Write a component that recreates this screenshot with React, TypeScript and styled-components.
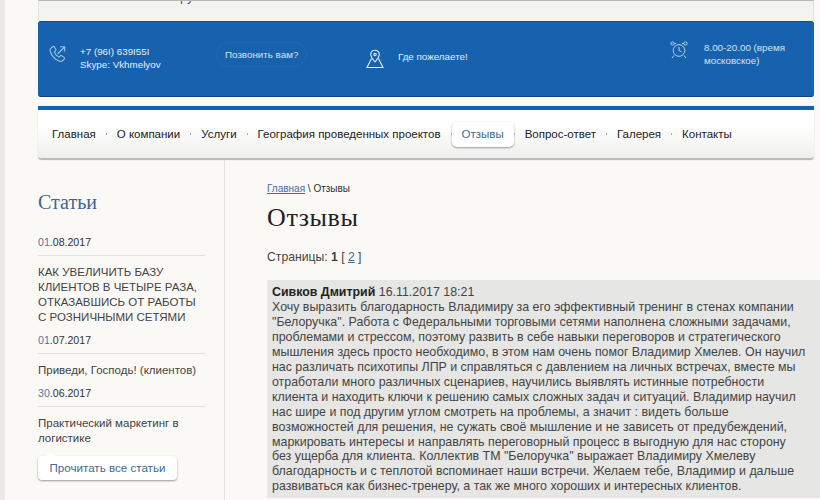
import * as React from 'react';
import styled, { createGlobalStyle } from 'styled-components';

const GlobalStyle = createGlobalStyle`
    html, body {
        margin: 0;
        padding: 0;
        height: 500px;
        overflow: hidden;
        background: #faf9f5;
        font-family: "Liberation Sans", Arial, sans-serif;
    }
`;

const Page = styled.div`
    width: 820px;
    height: 500px;
    overflow: hidden;
    border-left: 5px solid #e9e9e7;
    box-sizing: border-box;
    background: #faf9f5;
`;

const Container = styled.div`
    margin-left: 33px;
    width: 776px;
`;

const TopStrip = styled.div`
    height: 21px;
    box-sizing: border-box;
    border-top: 1px solid #b9b9b7;
    background: #f3f3f2;
    overflow: hidden;
    border-left: 1px solid #e4e4e2;
    border-right: 1px solid #e4e4e2;
`;

const TopStripText = styled.div`
    margin: -11px 0 0 141px;
    font-size: 13px;
    line-height: 14px;
    color: #555;
`;

const BlueBar = styled.div`
    height: 76px;
    box-sizing: border-box;
    background: #1762ae;
    border-top: 1px solid #0f4f95;
    border-bottom: 1px solid #0c447f;
    border-radius: 3px;
    display: flex;
    color: #e4eef7;
    font-size: 9.8px;
    line-height: 13px;
`;

const PhoneBlock = styled.div`
    display: flex;
    align-items: flex-start;
    width: 178px;
    padding: 23px 0 0 11px;
    box-sizing: border-box;
`;

const IconSlot = styled.div<{ $w: number; $top?: number }>`
    width: ${p => p.$w}px;
    margin-top: ${p => p.$top || 0}px;
    flex: none;
    line-height: 0;
`;

const CallSlot = styled.div`
    width: 150px;
    padding-top: 20px;
`;

const CallButton = styled.div`
    display: inline-block;
    height: 25px;
    line-height: 24px;
    box-sizing: border-box;
    padding: 0 8px;
    border-radius: 13px;
    border: 1px solid #1f6ab4;
    color: #d3e3f2;
`;

const WishBlock = styled.div`
    display: flex;
    width: 304px;
    padding-top: 27px;
    box-sizing: border-box;
`;

const WishText = styled.div`
    padding-top: 1px;
`;

const TimeBlock = styled.div`
    display: flex;
    padding-top: 20px;
    color: #d5e3f1;
    line-height: 12.5px;
`;

const NavBar = styled.nav`
    margin-top: 9px;
    height: 54px;
    box-sizing: border-box;
    border-top: 4px solid #1762ae;
    border-bottom: 2px solid #bcbcba;
    border-radius: 0 0 4px 4px;
    background: linear-gradient(#ffffff 30%, #efefee);
    box-shadow: 0 0 1px #bbb;
    display: flex;
    align-items: center;
    padding: 0 0 0 4px;
    font-size: 11.5px;
    color: #222;
`;

const NavItem = styled.div<{ $active?: boolean }>`
    height: 25px;
    line-height: 25px;
    padding: 0 10px;
    margin-top: 1px;
    border-radius: 5px;
    color: ${p => (p.$active ? '#3f6a97' : '#222')};
    background: ${p => (p.$active ? '#fff' : 'transparent')};
    box-shadow: ${p => (p.$active ? '0 1px 2px #999' : 'none')};
`;

const NavDot = styled.span`
    width: 1px;
    height: 2px;
    background: #9fb2c6;
    flex: none;
`;

const Body = styled.div`
    display: flex;
`;

const Sidebar = styled.aside`
    width: 220px;
    height: 340px;
    flex: none;
    box-sizing: border-box;
    padding: 30px 0 0 33px;
    border-right: 1px solid #e2e2df;
`;

const SideTitle = styled.h2`
    margin: 0 0 21px;
    font: 400 20px/24px "Liberation Serif", serif;
    color: #3f6596;
`;

const DateRow = styled.div`
    width: 167px;
    height: 20px;
    font-size: 10.6px;
    line-height: 15px;
    color: #333;
    border-bottom: 1px solid #e2e1dd;
`;

const DateDay = styled.span`
    color: #4f75a3;
`;

const ArticleLink = styled.div`
    width: 167px;
    margin: 9px 0 8px;
    font-size: 11.5px;
    line-height: 15px;
    color: #444;
`;

const AllButton = styled.div`
    position: relative;
    display: inline-block;
    margin-top: 2px;
    height: 24px;
    line-height: 24px;
    padding: 0 11.500px;
    background: #fff;
    border-radius: 4px;
    box-shadow: 0 1px 2px #999;
    font-size: 11.6px;
    color: #45698f;
    &::before {
        content: '';
        position: absolute;
        left: 8px;
        top: -4px;
        border-left: 5px solid transparent;
        border-right: 5px solid transparent;
        border-bottom: 4px solid #fff;
    }
`;

const Main = styled.main`
    flex: 1;
    padding: 22px 0 0 42px;
`;

const Crumbs = styled.div`
    font-size: 10px;
    line-height: 14px;
    color: #333;
`;

const CrumbLink = styled.a`
    color: #3f6f9f;
    text-decoration: underline;
`;

const PageTitle = styled.h1`
    margin: 7px 0 16px;
    font: 400 26px/30px "Liberation Serif", serif;
    letter-spacing: 0.6px;
    color: #222;
`;

const Pager = styled.div`
    font-size: 12.2px;
    line-height: 16px;
    color: #444;
    margin-bottom: 15px;
`;

const PagerLink = styled.a`
    color: #2f6c9e;
    text-decoration: underline;
`;

const Review = styled.div`
    background: #e6e6e5;
    padding: 5px 5px 4px;
    font-size: 12.4px;
    line-height: 14.95px;
    color: #444;
    white-space: nowrap;
`;

const Author = styled.b`
    color: #222;
`;

const PhoneIcon = () => (
    <svg width="18" height="18" viewBox="0 0 18 18" fill="none" stroke="#9cc4e6" strokeWidth="1.1">
        <path d="M4 1.500 1.800 3.400c-.9.8-.9 2-.4 3.400 1.400 4.200 4.600 7.600 8.600 9.200 1.500.6 2.900.5 3.700-.4l1.600-1.800c.4-.5.3-1-.2-1.400l-2.600-1.800c-.5-.3-1-.2-1.300.2l-1 1.200C8 11.300 6 9 5.300 6.700l1.300-.9c.5-.4.5-.9.2-1.400L5.200 1.700C4.900 1.300 4.400 1.200 4 1.500Z" />
        <path d="M8.500 9 15.500 2M11 1.800h4.700V6.500" />
    </svg>
);

const PinIcon = () => (
    <svg width="18" height="20" viewBox="0 0 18 20" fill="none" stroke="#e4eef7" strokeWidth="1.1">
        <path d="M9 13C6.500 10 4.700 8 4.700 5.500a4.300 4.300 0 0 1 8.600 0C13.300 8 11.500 10 9 13Z" />
        <circle cx="9" cy="5.500" r="1.200" />
        <path d="M5.500 9.500 1 18.500h16l-4.500-9" />
    </svg>
);

const ClockIcon = () => (
    <svg width="18" height="18" viewBox="0 0 18 18" fill="none" stroke="#b7d3ec" strokeWidth="1">
        <circle cx="9" cy="9.500" r="5.800" />
        <path d="M9 6v3.500l2.500 1.300" />
        <circle cx="2.500" cy="2.500" r="1.600" />
        <circle cx="15.500" cy="2.500" r="1.600" />
        <path d="M4 14.500 2 17M14 14.500l2 2.500M4 2.500h2M14 2.500h-2" />
    </svg>
);

const navItems = ['Главная', 'О компании', 'Услуги', 'География проведенных проектов', 'Отзывы', 'Вопрос-ответ', 'Галерея', 'Контакты'];

const reviewLines = [
    'Хочу выразить благодарность Владимиру за его эффективный тренинг в стенах компании',
    '"Белоручка". Работа с Федеральными торговыми сетями наполнена сложными задачами,',
    'проблемами и стрессом, поэтому развить в себе навыки переговоров и стратегического',
    'мышления здесь просто необходимо, в этом нам очень помог Владимир Хмелев. Он научил',
    'нас различать психотипы ЛПР и справляться с давлением на личных встречах, вместе мы',
    'отработали много различных сценариев, научились выявлять истинные потребности',
    'клиента и находить ключи к решению самых сложных задач и ситуаций. Владимир научил',
    'нас шире и под другим углом смотреть на проблемы, а значит : видеть больше',
    'возможностей для решения, не сужать своё мышление и не зависеть от предубеждений,',
    'маркировать интересы и направлять переговорный процесс в выгодную для нас сторону',
    'без ущерба для клиента. Коллектив ТМ "Белоручка" выражает Владимиру Хмелеву',
    'благодарность и с теплотой вспоминает наши встречи. Желаем тебе, Владимир и дальше',
    'развиваться как бизнес-тренеру, а так же много хороших и интересных клиентов.'
];

const articles = [
    { day: '01', rest: '.08.2017', title: ['КАК УВЕЛИЧИТЬ БАЗУ', 'КЛИЕНТОВ В ЧЕТЫРЕ РАЗА,', 'ОТКАЗАВШИСЬ ОТ РАБОТЫ', 'С РОЗНИЧНЫМИ СЕТЯМИ'] },
    { day: '01', rest: '.07.2017', title: ['Приведи, Господь! (клиентов)'] },
    { day: '30', rest: '.06.2017', title: ['Практический маркетинг в', 'логистике'] }
];

const App: React.FC = () => (
    <Page>
        <GlobalStyle />
        <Container>
            <TopStrip>
                <TopStripText>ру</TopStripText>
            </TopStrip>
            <BlueBar>
                <PhoneBlock>
                    <IconSlot $w={31}><PhoneIcon /></IconSlot>
                    <div>
                        +7 (96I) 639I55I<br />
                        Skype: Vkhmelyov
                    </div>
                </PhoneBlock>
                <CallSlot>
                    <CallButton>Позвонить вам?</CallButton>
                </CallSlot>
                <WishBlock>
                    <IconSlot $w={32}><PinIcon /></IconSlot>
                    <WishText>Где пожелаете!</WishText>
                </WishBlock>
                <TimeBlock>
                    <IconSlot $w={34} $top={-1}><ClockIcon /></IconSlot>
                    <div>
                        8.00-20.00 (время<br />
                        московское)
                    </div>
                </TimeBlock>
            </BlueBar>
            <NavBar>
                {navItems.map((item, index) => (
                    <React.Fragment key={item}>
                        {index > 0 && <NavDot />}
                        <NavItem $active={item === 'Отзывы'}>{item}</NavItem>
                    </React.Fragment>
                ))}
            </NavBar>
        </Container>
        <Body>
            <Sidebar>
                <SideTitle>Статьи</SideTitle>
                {articles.map(article => (
                    <React.Fragment key={article.rest}>
                        <DateRow><DateDay>{article.day}</DateDay>{article.rest}</DateRow>
                        <ArticleLink>
                            {article.title.map(line => <div key={line}>{line}</div>)}
                        </ArticleLink>
                    </React.Fragment>
                ))}
                <AllButton>Прочитать все статьи</AllButton>
            </Sidebar>
            <Main>
                <Crumbs><CrumbLink>Главная</CrumbLink> \ Отзывы</Crumbs>
                <PageTitle>Отзывы</PageTitle>
                <Pager>Страницы: <b>1</b> [ <PagerLink>2</PagerLink> ]</Pager>
                <Review>
                    <Author>Сивков Дмитрий</Author> 16.11.2017 18:21
                    {reviewLines.map(line => <div key={line}>{line}</div>)}
                </Review>
            </Main>
        </Body>
    </Page>
);

export default App;
